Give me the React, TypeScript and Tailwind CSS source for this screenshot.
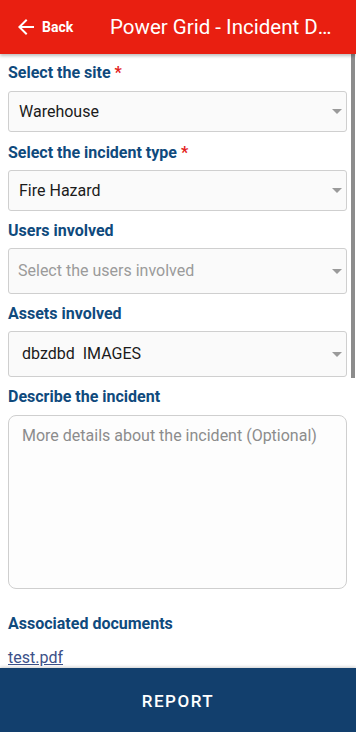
import React from 'react';

function Caret() {
    return (
        <svg width="10" height="5" viewBox="0 0 10 5" className="shrink-0">
            <path d="M0 0h10L5 5z" fill="#9a9a9a" />
        </svg>
    );
}

function Label({ text, required, className }: { text: string; required?: boolean; className: string }) {
    return (
        <div className={`text-[16px] leading-[22px] font-bold text-[#0f4a7d] ${className}`}>
            {text}
            {required && <span className="text-[#e3211b]"> *</span>}
        </div>
    );
}

function Select({ value, placeholder, className, pl }: { value?: string; placeholder?: string; className: string; pl: string }) {
    return (
        <div className={`flex items-center justify-between border border-[#cfcfcf] bg-[#fafafa] rounded-[3px] pr-[4px] ${pl} ${className}`}>
            {value ? (
                <span className="text-[16px] text-[#1b1b1b] whitespace-pre">{value}</span>
            ) : (
                <span className="text-[16px] text-[#9b9b9b]">{placeholder}</span>
            )}
            <Caret />
        </div>
    );
}

export default function App() {
    return (
        <div className="h-screen w-full flex flex-col bg-white overflow-hidden" style={{ fontFamily: 'Roboto, "Liberation Sans", sans-serif' }}>
            <header className="h-[54px] shrink-0 bg-[#e91f11] flex items-center text-white shadow-[0_2px_3px_rgba(0,0,0,0.25)] relative z-10">
                <div className="flex items-center pl-[14px] w-[110px] shrink-0">
                    <svg width="24" height="24" viewBox="0 0 24 24">
                        <path d="M20 11H7.83l5.59-5.59L12 4l-8 8 8 8 1.41-1.41L7.83 13H20v-2z" fill="white" />
                    </svg>
                    <span className="ml-[4px] text-[14px] font-bold">Back</span>
                </div>
                <h1 className="min-w-0 text-[20.5px] leading-[26px] truncate pr-[24px]">Power Grid - Incident Details</h1>
            </header>

            <main className="flex-1 relative overflow-hidden">
                <div className="pl-[8px] pr-[9px] pt-[8px]">
                    <Label text="Select the site" required className="" />
                    <Select value="Warehouse" pl="pl-[10px]" className="mt-[7px] h-[41px]" />

                    <Label text="Select the incident type" required className="mt-[10px]" />
                    <Select value="Fire Hazard" pl="pl-[10px]" className="mt-[6px] h-[41px]" />

                    <Label text="Users involved" className="mt-[9px]" />
                    <Select placeholder="Select the users involved" pl="pl-[9px]" className="mt-[6px] h-[46px]" />

                    <Label text="Assets involved" className="mt-[9px]" />
                    <Select value="dbzdbd  IMAGES" pl="pl-[13px]" className="mt-[6px] h-[46px]" />

                    <Label text="Describe the incident" className="mt-[9px]" />
                    <div className="mt-[7px] h-[174px] border border-[#cfcfcf] bg-[#fdfdfd] rounded-[8px] px-[13px] pt-[9px] text-[16px] leading-[22px] text-[#8c8c8c]">
                        More details about the incident (Optional)
                    </div>

                    <Label text="Associated documents" className="mt-[24px]" />
                    <a className="mt-[13px] block w-fit text-[16px] leading-[20px] text-[#3b5088] underline">test.pdf</a>
                </div>
                <div className="absolute right-[1px] top-0 w-[4px] h-[324px] bg-[#8c8c8c]" />
            </main>

            <footer className="h-[64px] shrink-0 bg-[#123f6d] flex items-center justify-center pt-[3px] shadow-[0_-1px_3px_rgba(0,0,0,0.2)]">
                <span className="text-white text-[17px] font-medium tracking-[1.5px]">REPORT</span>
            </footer>
        </div>
    );
}
